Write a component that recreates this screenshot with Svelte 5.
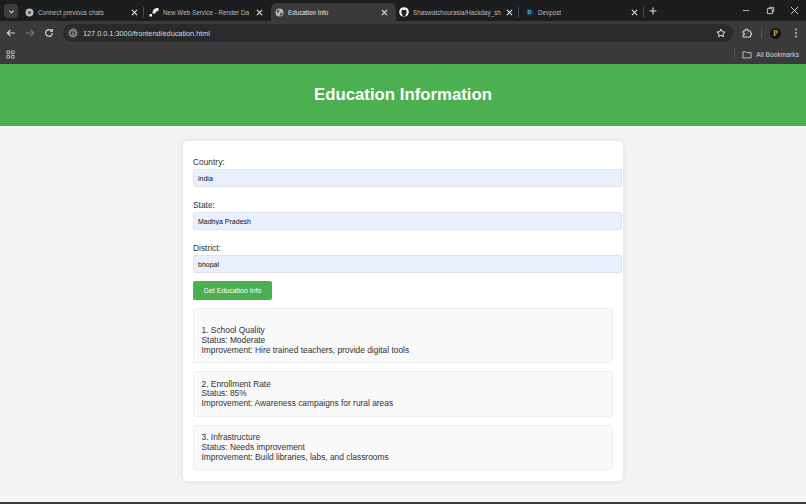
<script>
    let tabs = [
        {id: 1, title: 'Connect previous chats', icon: 'chat', divider: true},
        {id: 2, title: 'New Web Service - Render Da', icon: 'render'},
        {id: 3, title: 'Education Info', icon: 'globe', active: true},
        {id: 4, title: 'Shaswatchourasia/Hackday_sh', icon: 'github', divider: true},
        {id: 5, title: 'Devpost', icon: 'devpost', divider: true}
    ];

    let fields = [
        {label: 'Country:', value: 'india'},
        {label: 'State:', value: 'Madhya Pradesh'},
        {label: 'District:', value: 'bhopal'}
    ];

    let results = [
        {name: '1. School Quality', status: 'Moderate', improvement: 'Hire trained teachers, provide digital tools'},
        {name: '2. Enrollment Rate', status: '85%', improvement: 'Awareness campaigns for rural areas'},
        {name: '3. Infrastructure', status: 'Needs improvement', improvement: 'Build libraries, labs, and classrooms'}
    ];
</script>

<div class="chrome">
    <div class="tabstrip">
        <button class="tab-search" aria-label="Search tabs">
            <svg width="7" height="7" viewBox="0 0 8 8"><path d="M1.5 3 L4 5.5 L6.5 3" fill="none" stroke="#d8d8d8" stroke-width="1.3"/></svg>
        </button>
        {#each tabs as tab}
            <div class="tab" class:active={tab.active} class:divider={tab.divider}>
                <span class="favicon">
                    {#if tab.icon === 'chat'}
                        <svg width="9" height="9" viewBox="0 0 10 10"><circle cx="5" cy="5" r="4.4" fill="#b9b9b9"/><circle cx="5" cy="5" r="1.7" fill="#4a4a4a"/></svg>
                    {:else if tab.icon === 'render'}
                        <svg width="10" height="10" viewBox="0 0 10 10"><path d="M0.5 9.5 V7 H3 V9.5 Z M3.5 6.5 C3.5 3 5 1 9.5 1 V4 C7 4 6.5 5 6.5 6.5 Z" fill="#f2f2f2"/></svg>
                    {:else if tab.icon === 'globe'}
                        <svg width="9" height="9" viewBox="0 0 10 10"><circle cx="5" cy="5" r="4.4" fill="#b5b8bb"/><path d="M2 2.5 L5 2 L4.5 4.5 L2.5 5.5 Z M6 5.5 L8.5 5 L7.5 8 L5.5 8.5 Z" fill="#4a4a4a"/></svg>
                    {:else if tab.icon === 'github'}
                        <svg width="10" height="10" viewBox="0 0 10 10"><circle cx="5" cy="5" r="4.8" fill="#f4f4f4"/><path d="M3.4 9.6 V7.4 C2.6 6.9 2.3 6.2 2.3 5.2 C2.3 4.6 2.5 4.1 2.8 3.8 L2.8 2.6 L3.9 3.1 C4.6 2.9 5.4 2.9 6.1 3.1 L7.2 2.6 L7.2 3.8 C7.5 4.1 7.7 4.6 7.7 5.2 C7.7 6.2 7.4 6.9 6.6 7.4 V9.6 Z" fill="#202124"/></svg>
                    {:else}
                        <svg width="9" height="9" viewBox="0 0 10 10"><path d="M2.7 0.8 H7.3 L9.6 5 L7.3 9.2 H2.7 L0.4 5 Z" fill="#10334d"/><text x="5" y="7.2" font-size="6" font-weight="700" text-anchor="middle" fill="#5cc6e8" font-family="Liberation Sans, sans-serif">D</text></svg>
                    {/if}
                </span>
                <span class="tab-title">{tab.title}</span>
                <svg class="tab-close" width="7" height="7" viewBox="0 0 8 8"><path d="M1 1 L7 7 M7 1 L1 7" stroke="#e4e4e4" stroke-width="1.2"/></svg>
            </div>
        {/each}
        <svg class="new-tab" width="8" height="8" viewBox="0 0 8 8"><path d="M4 0.5 V7.5 M0.5 4 H7.5" stroke="#dedede" stroke-width="1.1"/></svg>
        <div class="window-controls">
            <svg width="9" height="9" viewBox="0 0 10 10"><path d="M1 5 H8" stroke="#bdbdbd" stroke-width="1"/></svg>
            <svg width="9" height="9" viewBox="0 0 10 10"><path d="M1.5 3 H7 V8.5 H1.5 Z M3.5 3 V1.5 H8.5 V6.5 H7" fill="none" stroke="#d0d0d0" stroke-width="1"/></svg>
            <svg width="9" height="9" viewBox="0 0 10 10"><path d="M1 1 L9 9 M9 1 L1 9" stroke="#e0e0e0" stroke-width="1"/></svg>
        </div>
    </div>

    <div class="toolbar">
        <svg class="nav" width="10" height="10" viewBox="0 0 10 10"><path d="M9 5 H1.5 M4.5 1.8 L1.3 5 L4.5 8.2" fill="none" stroke="#d6d6d6" stroke-width="1.2"/></svg>
        <svg class="nav" width="10" height="10" viewBox="0 0 10 10"><path d="M1 5 H8.5 M5.5 1.8 L8.7 5 L5.5 8.2" fill="none" stroke="#777" stroke-width="1.2"/></svg>
        <svg class="nav" width="10" height="10" viewBox="0 0 10 10"><path d="M8.4 5 A3.4 3.4 0 1 1 7.4 2.6 M8.4 0.9 V3.2 H6.1" fill="none" stroke="#d6d6d6" stroke-width="1.2"/></svg>
        <div class="omnibox">
            <span class="site-info">
                <svg width="8" height="8" viewBox="0 0 10 10"><circle cx="5" cy="5" r="4.2" fill="none" stroke="#d6d6d6" stroke-width="1.1"/><path d="M5 4.4 V7.4 M5 2.6 V3.6" stroke="#d6d6d6" stroke-width="1.1"/></svg>
            </span>
            <span class="url">127.0.0.1:3000/frontend/education.html</span>
            <svg class="star" width="10" height="10" viewBox="0 0 10 10"><path d="M5 1 L6.2 3.7 L9.1 4 L6.9 5.9 L7.5 8.8 L5 7.3 L2.5 8.8 L3.1 5.9 L0.9 4 L3.8 3.7 Z" fill="none" stroke="#e2e2e2" stroke-width="1"/></svg>
        </div>
        <svg class="ext" width="10" height="10" viewBox="0 0 10 10"><path d="M1 3 H3.2 V1.2 H5.8 V3 H8.5 V5 H9.5 V7 H8.5 V9 H1 V6.8 H2.4 V5.2 H1 Z" fill="none" stroke="#d8d8d8" stroke-width="1"/></svg>
        <span class="sep"></span>
        <span class="avatar">P</span>
        <svg class="menu" width="4" height="10" viewBox="0 0 4 10"><circle cx="2" cy="1.5" r="0.9" fill="#cfcfcf"/><circle cx="2" cy="5" r="0.9" fill="#cfcfcf"/><circle cx="2" cy="8.5" r="0.9" fill="#cfcfcf"/></svg>
    </div>

    <div class="bookmarks">
        <svg width="9" height="9" viewBox="0 0 10 10"><path d="M1 1 H4 V4 H1 Z M6 1 H9 V4 H6 Z M1 6 H4 V9 H1 Z M6 6 H9 V9 H6 Z" fill="none" stroke="#c4c4c4" stroke-width="1"/></svg>
        <div class="all-bookmarks">
            <span class="sep"></span>
            <svg width="10" height="9" viewBox="0 0 11 10"><path d="M1 2 H4.2 L5.2 3 H10 V8.8 H1 Z" fill="none" stroke="#cfcfcf" stroke-width="1"/></svg>
            <span>All Bookmarks</span>
        </div>
    </div>
</div>

<header>
    <h1>Education Information</h1>
</header>

<main>
    <div class="card">
        {#each fields as field}
            <label>
                {field.label}
                <input type="text" value={field.value} />
            </label>
        {/each}
        <button class="submit">Get Education Info</button>
        {#each results as item, i}
            <div class="result" class:first={i === 0}>
                {item.name}<br />
                Status: {item.status}<br />
                Improvement: {item.improvement}
            </div>
        {/each}
    </div>
</main>
<div class="bottom-edge"></div>

<style>
    :global(body) {
        margin: 0;
        background: #f4f4f4;
        font-family: "Liberation Sans", Arial, sans-serif;
        overflow: hidden;
    }

    .chrome {
        background: #202124;
        color: #e3e3e3;
        font-family: "Liberation Sans", Arial, sans-serif;
    }

    .tabstrip {
        height: 21px;
        display: flex;
        align-items: flex-end;
        background: #1c1d1f;
    }
    .tab-search {
        width: 14px;
        height: 14px;
        margin: 0 3px 3px 4px;
        padding: 0;
        border: 0;
        border-radius: 4px;
        background: #3b3c3e;
        display: flex;
        align-items: center;
        justify-content: center;
    }
    .tab {
        position: relative;
        width: 125px;
        height: 18px;
        box-sizing: border-box;
        padding: 0 8px 0 3px;
        display: flex;
        align-items: center;
        gap: 4px;
        font-size: 6.3px;
        color: #b9babb;
        border-radius: 6px 6px 0 0;
    }
    .tab.active {
        background: #3a3a3a;
        color: #e6e6e6;
    }
    .tab.divider::after {
        content: "";
        position: absolute;
        right: 2px;
        top: 4px;
        width: 1px;
        height: 10px;
        background: #4a4b4d;
    }
    .favicon {
        width: 10px;
        height: 10px;
        flex: none;
        display: flex;
        align-items: center;
        justify-content: center;
    }
    .tab-title {
        flex: 1;
        white-space: nowrap;
    }
    .tab-close {
        flex: none;
    }
    .new-tab {
        margin: 0 0 6px 3px;
    }
    .window-controls {
        margin-left: auto;
        display: flex;
        gap: 15px;
        padding: 0 7px 6px 0;
    }

    .toolbar {
        height: 23px;
        box-sizing: border-box;
        padding: 3px 0 2px 6px;
        background: #3a3a3a;
        display: flex;
        align-items: center;
    }
    .nav {
        margin-right: 9px;
    }
    .omnibox {
        width: 670px;
        height: 18px;
        padding: 0 4px;
        box-sizing: border-box;
        border-radius: 9px;
        background: #292a2c;
        display: flex;
        align-items: center;
        font-size: 7.3px;
        color: #d9d9d9;
    }
    .site-info {
        width: 12px;
        height: 12px;
        border-radius: 50%;
        background: #3b3c3e;
        display: flex;
        align-items: center;
        justify-content: center;
        margin-right: 4px;
    }
    .url {
        flex: 1;
    }
    .star {
        margin-right: 3px;
    }
    .ext {
        margin-left: 9px;
    }
    .sep {
        width: 1px;
        height: 10px;
        background: #575757;
    }
    .toolbar .sep {
        margin: 0 8px 0 9px;
    }
    .avatar {
        width: 11px;
        height: 11px;
        border-radius: 50%;
        background: #16130f;
        color: #d9a441;
        font: 700 8px/11px "Liberation Serif", serif;
        text-align: center;
    }
    .menu {
        margin-left: 12.5px;
    }

    .bookmarks {
        height: 20px;
        background: #3a3a3a;
        display: flex;
        align-items: center;
        padding: 0 7px 0 6px;
        box-sizing: border-box;
    }
    .all-bookmarks {
        margin-left: auto;
        display: flex;
        align-items: center;
        gap: 4px;
        font-size: 6.7px;
        color: #d4d4d4;
    }
    .all-bookmarks .sep {
        margin-right: 3px;
    }

    header {
        height: 62px;
        background: #4caf50;
        display: flex;
        align-items: center;
        justify-content: center;
    }
    h1 {
        margin: 0;
        color: #fff;
        font-size: 16.8px;
        font-weight: 700;
    }

    main {
        height: 376px;
        padding-top: 15px;
        box-sizing: border-box;
        display: flex;
        justify-content: center;
    }
    .card {
        width: 440px;
        height: 340px;
        box-sizing: border-box;
        padding: 15px 10px;
        background: #fff;
        border-radius: 5px;
        box-shadow: 0 0 7px rgba(0, 0, 0, 0.1);
    }
    label {
        display: block;
        font-size: 8.4px;
        line-height: 12px;
        color: #333;
    }
    label + label {
        margin-top: 12.2px;
    }
    input {
        display: block;
        width: 429px;
        height: 18px;
        margin-top: 1px;
        padding: 0 4px;
        box-sizing: border-box;
        border: 1px solid #dfe3ea;
        border-radius: 2px;
        background: #e8f0fe;
        font: 7px "Liberation Sans", sans-serif;
        color: #111;
    }
    .submit {
        display: block;
        width: 79px;
        height: 19px;
        margin-top: 7.6px;
        padding: 0;
        border: 0;
        border-radius: 2px;
        background: #4caf50;
        color: #fff;
        font: 7px "Liberation Sans", sans-serif;
    }
    .result {
        width: 420px;
        box-sizing: border-box;
        margin-top: 8px;
        padding: 7.2px 7.5px;
        border: 1px solid #eee;
        border-radius: 3px;
        background: #f9f9f9;
        font-size: 8.4px;
        line-height: 9.7px;
        color: #333;
    }
    .result.first {
        padding-top: 17.2px;
    }
    .bottom-edge {
        height: 2px;
        background: #3c3c3c;
    }
</style>
